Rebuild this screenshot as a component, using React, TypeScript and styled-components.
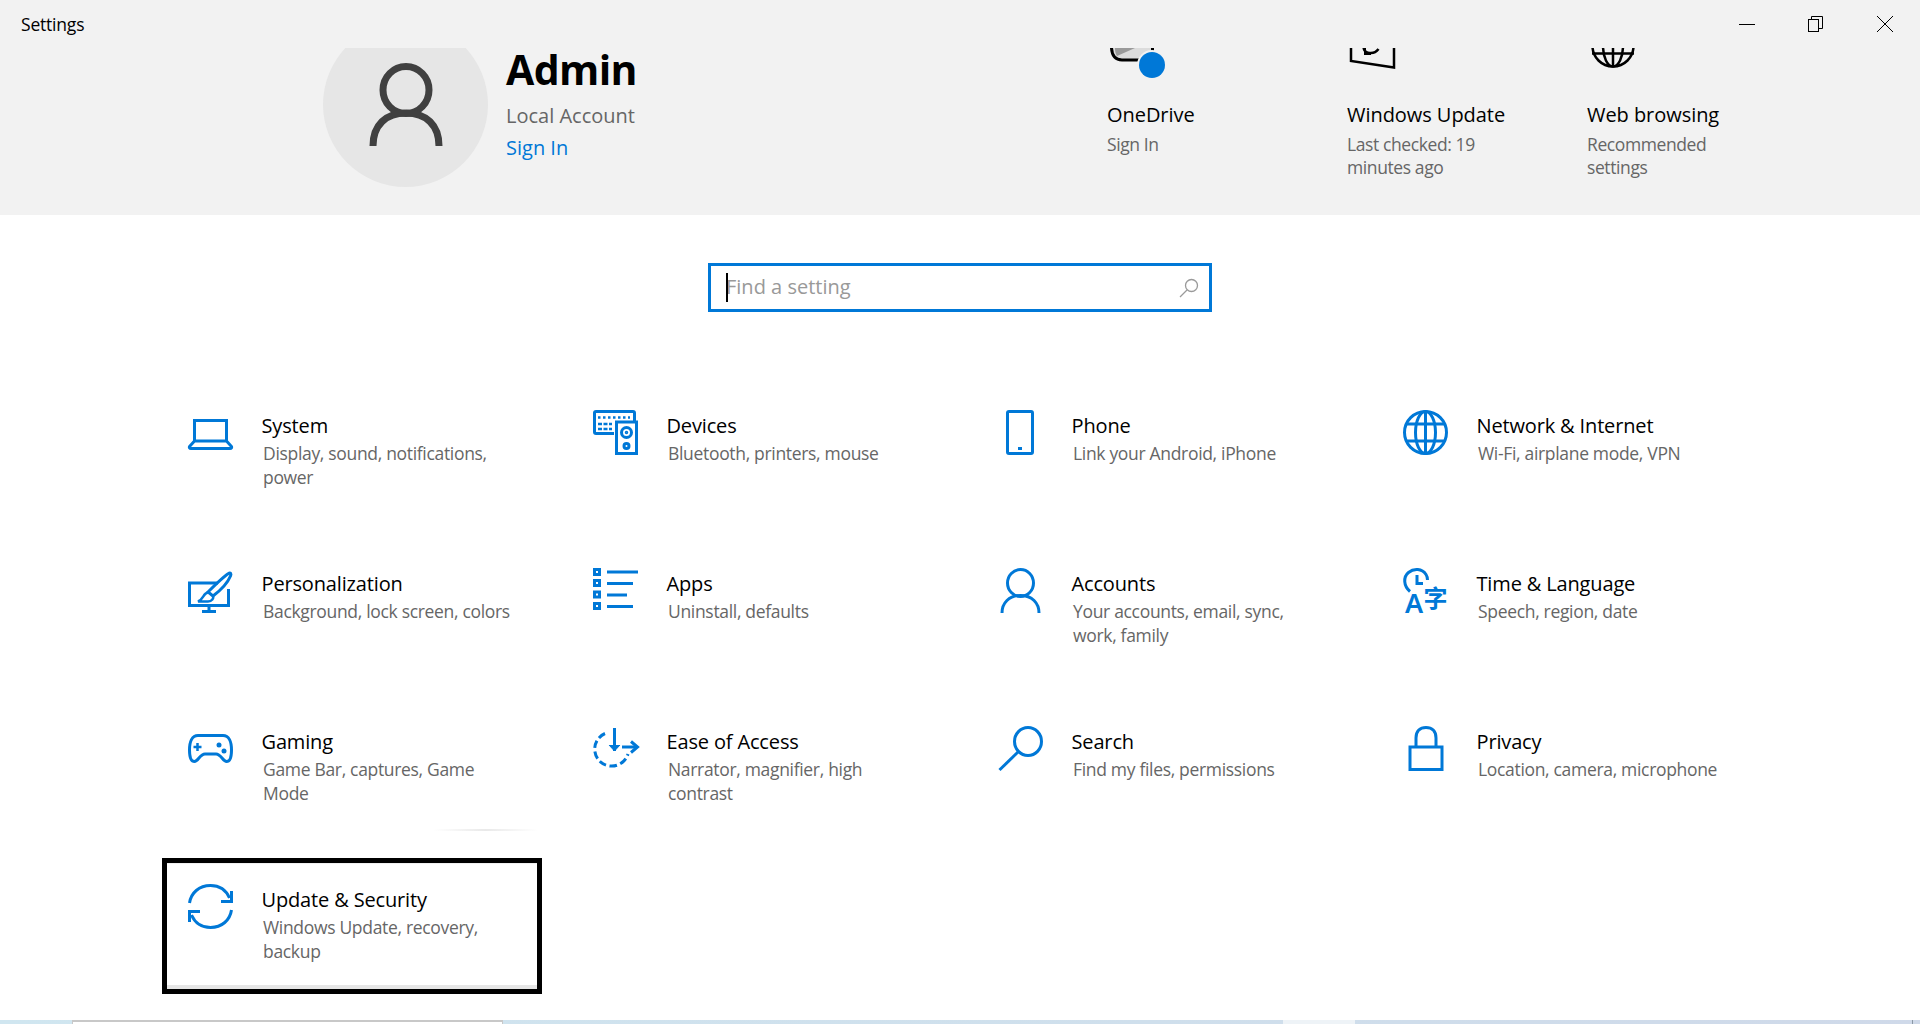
import { FC, ReactNode } from "react";
import styled, { createGlobalStyle } from "styled-components";

const BLUE = "#0078d7";

const GlobalStyle = createGlobalStyle`
  html, body {
    margin: 0;
    padding: 0;
    background: #ffffff;
    font-family: "Open Sans", "Noto Sans", "Liberation Sans", sans-serif;
  }
  * {
    box-sizing: border-box;
  }
`;

const Page = styled.div`
  width: 1920px;
  height: 1024px;
  display: flex;
  flex-direction: column;
  overflow: hidden;
`;

const Header = styled.header`
  height: 215px;
  flex: none;
  background: #f2f2f2;
  display: flex;
  flex-direction: column;
`;

const TitleBar = styled.div`
  height: 48px;
  flex: none;
  display: flex;
  align-items: center;
  justify-content: space-between;
  padding: 0 27px 0 21px;
`;

const AppTitle = styled.div`
  font-size: 17.5px;
  letter-spacing: -0.2px;
  color: #000;
`;

const WindowButtons = styled.div`
  display: flex;
  gap: 53px;
  svg {
    display: block;
  }
`;

const HeaderBody = styled.div`
  flex: 1;
  min-height: 0;
  display: flex;
  padding-left: 323px;
`;

const Profile = styled.div`
  width: 784px;
  flex: none;
  display: flex;
  gap: 18px;
`;

const AvatarClip = styled.div`
  width: 165px;
  height: 167px;
  flex: none;
  overflow: hidden;
`;

const Avatar = styled.div`
  width: 165px;
  height: 165px;
  margin-top: -26px;
  border-radius: 50%;
  background: #e6e6e6;
  display: flex;
  align-items: flex-start;
  justify-content: center;
  padding-top: 41px;
`;

const ProfileText = styled.div`
  display: flex;
  flex-direction: column;
`;

const UserName = styled.div`
  font-size: 41px;
  line-height: 42px;
  font-weight: 700;
  letter-spacing: -0.6px;
  color: #000;
`;

const AccountType = styled.div`
  font-size: 20px;
  line-height: 28px;
  margin-top: 12px;
  color: #666;
`;

const SignIn = styled.a`
  font-size: 20px;
  line-height: 28px;
  margin-top: 4px;
  color: ${BLUE};
`;

const Shortcut = styled.div`
  width: 240px;
  flex: none;
  display: flex;
  flex-direction: column;
`;

const ShortcutIcon = styled.svg`
  display: block;
  width: 60px;
  height: 54px;
  flex: none;
`;

const ShortcutTitle = styled.div`
  font-size: 20px;
  line-height: 26px;
  letter-spacing: -0.05px;
  color: #000;
`;

const ShortcutSub = styled.div`
  font-size: 17.5px;
  line-height: 23px;
  margin-top: 5px;
  max-width: 160px;
  letter-spacing: -0.4px;
  color: #666;
`;

const Main = styled.main`
  flex: 1;
  min-height: 0;
  display: flex;
  flex-direction: column;
  align-items: flex-start;
  padding: 48px 0 0 162px;
`;

const SearchBox = styled.div`
  width: 504px;
  height: 49px;
  margin-left: 546px;
  flex: none;
  border: 3px solid ${BLUE};
  display: flex;
  align-items: center;
  justify-content: space-between;
  padding: 0 10px 2px 15px;
`;

const Caret = styled.span`
  position: absolute;
  left: 0;
  top: 2px;
  width: 2px;
  height: 29px;
  background: #000;
`;

const Placeholder = styled.div`
  position: relative;
  font-size: 20px;
  line-height: 31px;
  color: #999;
`;

const SearchIcon = styled.svg`
  display: block;
  width: 20px;
  height: 20px;
  margin-top: 2px;
`;

const Grid = styled.div`
  display: grid;
  grid-template-columns: repeat(4, 380px);
  grid-auto-rows: 136px;
  column-gap: 25px;
  row-gap: 22px;
  margin-top: 72px;
`;

const Tile = styled.div<{ $focused?: boolean; $shadow?: boolean }>`
  position: relative;
  display: flex;
  align-items: flex-start;
  padding: 26px 0 0 26px;
  box-shadow: ${(p) =>
    p.$focused
      ? "inset 0 0 0 5px #000, inset 0 6px 0 0 #efefef, inset 0 -9px 0 0 #e6e6e6"
      : "none"};
  &::after {
    content: "";
    display: ${(p) => (p.$shadow ? "block" : "none")};
    position: absolute;
    left: 271px;
    bottom: 5px;
    width: 105px;
    height: 2px;
    background: linear-gradient(90deg, #ffffff, #e9e9e9 50%, #ffffff);
  }
`;

const TileIcon = styled.svg`
  display: block;
  width: 45px;
  height: 45px;
  flex: none;
  fill: none;
  stroke: ${BLUE};
  stroke-width: 3;
  overflow: visible;
`;

const TileText = styled.div`
  margin-left: 28.5px;
  margin-top: 3px;
  display: flex;
  flex-direction: column;
`;

const TileTitle = styled.div`
  font-size: 20px;
  line-height: 26px;
  letter-spacing: -0.15px;
  color: #000;
`;

const TileSub = styled.div`
  font-size: 17.5px;
  line-height: 24px;
  margin: 2px 0 0 1.5px;
  max-width: 250px;
  letter-spacing: -0.32px;
  color: #666;
`;

const BottomStrip = styled.div`
  height: 4px;
  flex: none;
  display: grid;
  grid-template-columns: 72px 431px 780px 72px 557px 1fr;
  background: linear-gradient(90deg, #d0e6f0, #cfdfec 60%, #cfd9e9);
`;

const StripWindow = styled.div`
  background: #ffffff;
  border-top: 2px solid #c8c8c8;
  border-left: 1px solid #c8c8c8;
  border-right: 1px solid #c8c8c8;
`;

const StripHighlight = styled.div`
  background: #eef3f7;
`;

const StripGap = styled.div``;

const StripEdge = styled.div`
  border-left: 1px solid #8b98a5;
`;

const SystemIcon = () => (
  <>
    <path d="M6.5 31V10.5H38.5V31" />
    <path d="M6.5 31H38.5L43.5 36.5C44 37.5 43.5 38.5 42 38.5H3C1.5 38.5 1 37.5 1.5 36.5Z" />
  </>
);

const DevicesIcon = () => (
  <>
    <path d="M21 23.5H3C2 23.5 1.5 23 1.5 22V3C1.5 2 2 1.5 3 1.5H40C41 1.5 41.5 2 41.5 3V11" />
    <path d="M5 7.5H37" strokeDasharray="2.5 2.5" strokeWidth="2.5" />
    <path d="M5 14H19M5 19H19" strokeDasharray="4 1.5" strokeWidth="2.5" />
    <rect x="23.5" y="12" width="20" height="31.5" />
    <circle cx="33.5" cy="22.5" r="5" />
    <circle cx="33.5" cy="22.5" r="1" strokeWidth="1.5" />
    <circle cx="33.5" cy="36" r="2.5" />
  </>
);

const PhoneIcon = () => (
  <>
    <rect x="9.5" y="1.5" width="25" height="42" rx="1.5" />
    <path d="M20 38.5H24" />
  </>
);

const NetworkIcon = () => (
  <>
    <circle cx="22.5" cy="22.5" r="21" />
    <ellipse cx="22.5" cy="22.5" rx="10" ry="21" />
    <path d="M22.5 1.5V43.5M3.5 14H41.5M3.5 31H41.5" />
  </>
);

const PersonalizationIcon = () => (
  <>
    <path d="M30 15H1.5V37.5H40.5V21" />
    <path d="M21 38V44M14 43.5H28" />
    <path d="M40.5 5.5C42.5 4 43.5 6 42.5 8C40 14 33 22 25 28L20 24C26 18 35 9 40.5 5.5Z" />
    <path d="M20 24.5C15 25 16 31 10 33.5H20C24 33.5 26 30 25 28" strokeWidth="2.5" />
  </>
);

const AppsIcon = () => (
  <>
    <rect x="1.5" y="1.5" width="5" height="5" />
    <rect x="1.5" y="12.5" width="5" height="5" />
    <rect x="1.5" y="24" width="5" height="5" />
    <rect x="1.5" y="35.5" width="5" height="5" />
    <path d="M14 4H45M14 15.5H40M14 27H34M14 38.5H40" />
  </>
);

const AccountsIcon = () => (
  <>
    <ellipse cx="22.5" cy="15" rx="13" ry="13.5" />
    <path d="M4 45C4 35 11 27.5 22.5 27.5C34 27.5 41 35 41 45" />
  </>
);

const TimeIcon = () => (
  <>
    <path d="M7 23.5C0.5 18 0 9 5.5 4.5C11 0 19 0.5 23 6.5C24 8 24.5 10 24.5 12" />
    <path d="M14 7V15.5H20" />
    <text
      x="2"
      y="45"
      fontFamily="Noto Sans, sans-serif"
      fontSize="27"
      fontWeight="600"
      fill={BLUE}
      stroke="none"
    >
      A
    </text>
    <text
      x="20.5"
      y="38.5"
      fontFamily="Noto Sans CJK SC, sans-serif"
      fontSize="24"
      fontWeight="700"
      fill={BLUE}
      stroke="none"
    >
      字
    </text>
  </>
);

const GamingIcon = () => (
  <>
    <path d="M10 9.5H35C41 9.5 43.5 16 43.5 24C43.5 31 42 35.5 38.5 35.5C35 35.5 33 28 28 28H17C12 28 10 35.5 6.5 35.5C3 35.5 1.5 31 1.5 24C1.5 16 4 9.5 10 9.5Z" />
    <path d="M5.5 21H13.5M9.5 17V25" strokeWidth="2.5" />
    <circle cx="31" cy="19" r="2.5" fill={BLUE} stroke="none" />
    <circle cx="36" cy="25" r="2.5" fill={BLUE} stroke="none" />
  </>
);

const EaseIcon = () => (
  <>
    <path
      d="M12 7.5A17 17 0 1 0 35 28"
      strokeDasharray="7.5 3.5"
    />
    <path d="M21.5 2V25" />
    <path d="M16 19L21.5 25L27 19" fill={BLUE} strokeWidth="1" />
    <path d="M29 21H43" />
    <path d="M38 15.5L44.5 21L38 26.5" strokeWidth="3" />
  </>
);

const SearchTileIcon = () => (
  <>
    <ellipse cx="30" cy="15.5" rx="13.5" ry="14" />
    <path d="M20 26L1.5 44" />
  </>
);

const PrivacyIcon = () => (
  <>
    <rect x="7" y="21" width="32" height="22.5" />
    <path d="M13 21V12C13 5 17 1.5 23 1.5C29 1.5 33 5 33 12V21" />
  </>
);

const UpdateIcon = () => (
  <>
    <path d="M1.5 19C3 9 11 1.5 22.5 1.5C31 1.5 38 6 41.5 14" />
    <path d="M43.5 7V17.5H33" />
    <path d="M43.5 26C42 36 34 43.5 22.5 43.5C14 43.5 7 39 3.5 31" />
    <path d="M1.5 38V27.5H12" />
  </>
);

interface ITile {
  name: string;
  desc: string;
  icon: ReactNode;
}

const tiles: ITile[] = [
  { name: "System", desc: "Display, sound, notifications, power", icon: <SystemIcon /> },
  { name: "Devices", desc: "Bluetooth, printers, mouse", icon: <DevicesIcon /> },
  { name: "Phone", desc: "Link your Android, iPhone", icon: <PhoneIcon /> },
  { name: "Network & Internet", desc: "Wi-Fi, airplane mode, VPN", icon: <NetworkIcon /> },
  { name: "Personalization", desc: "Background, lock screen, colors", icon: <PersonalizationIcon /> },
  { name: "Apps", desc: "Uninstall, defaults", icon: <AppsIcon /> },
  { name: "Accounts", desc: "Your accounts, email, sync, work, family", icon: <AccountsIcon /> },
  { name: "Time & Language", desc: "Speech, region, date", icon: <TimeIcon /> },
  { name: "Gaming", desc: "Game Bar, captures, Game Mode", icon: <GamingIcon /> },
  { name: "Ease of Access", desc: "Narrator, magnifier, high contrast", icon: <EaseIcon /> },
  { name: "Search", desc: "Find my files, permissions", icon: <SearchTileIcon /> },
  { name: "Privacy", desc: "Location, camera, microphone", icon: <PrivacyIcon /> },
  { name: "Update & Security", desc: "Windows Update, recovery, backup", icon: <UpdateIcon /> }
];

const App: FC = () => {
  return (
    <Page>
      <GlobalStyle />
      <Header>
        <TitleBar>
          <AppTitle>Settings</AppTitle>
          <WindowButtons>
            <svg width="16" height="16" viewBox="0 0 16 16" fill="none" stroke="#000" strokeWidth="1">
              <path d="M0 8.5H16" />
            </svg>
            <svg width="16" height="16" viewBox="0 0 16 16" fill="none" stroke="#000" strokeWidth="1">
              <rect x="0.5" y="3.5" width="10" height="12" />
              <path d="M3.5 3.5V0.5H14.5V12.5H10.5" />
            </svg>
            <svg width="16" height="16" viewBox="0 0 16 16" fill="none" stroke="#000" strokeWidth="1">
              <path d="M0 0L16 16M16 0L0 16" />
            </svg>
          </WindowButtons>
        </TitleBar>
        <HeaderBody>
          <Profile>
            <AvatarClip>
              <Avatar>
                <svg width="76" height="86" viewBox="0 0 76 86" fill="none" stroke="#404040" strokeWidth="7">
                  <ellipse cx="38" cy="27" rx="23" ry="23.5" />
                  <path d="M5 83C5 62 18 50 38 50C58 50 71 62 71 83" />
                </svg>
              </Avatar>
            </AvatarClip>
            <ProfileText>
              <UserName>Admin</UserName>
              <AccountType>Local Account</AccountType>
              <SignIn>Sign In</SignIn>
            </ProfileText>
          </Profile>
          <Shortcut>
            <ShortcutIcon viewBox="0 0 60 54">
              <path d="M4.5 0C5 8 9 12 15 12H44V0Z" fill="#dcdcdc" />
              <path d="M8 0H28L10 8C8.5 6 8 3 8 0Z" fill="#9a9a9a" />
              <path d="M4.5 0C5 8 9 12 15 12H44" fill="none" stroke="#000" strokeWidth="3" />
              <path d="M44 1.5H47" stroke="#000" strokeWidth="3" />
              <circle cx="45" cy="17" r="15" fill="#f2f2f2" />
              <circle cx="45" cy="17" r="13" fill={BLUE} />
            </ShortcutIcon>
            <ShortcutTitle>OneDrive</ShortcutTitle>
            <ShortcutSub>Sign In</ShortcutSub>
          </Shortcut>
          <Shortcut>
            <ShortcutIcon viewBox="0 0 60 54" fill="none" stroke="#000" strokeWidth="2.5">
              <path d="M4 0V13L47 19.5V0" />
              <path d="M16.5 0C18 6 27 7 31.5 1" />
              <path d="M18 0V6L24 6" strokeWidth="2" />
            </ShortcutIcon>
            <ShortcutTitle>Windows Update</ShortcutTitle>
            <ShortcutSub>Last checked: 19 minutes ago</ShortcutSub>
          </Shortcut>
          <Shortcut>
            <ShortcutIcon viewBox="0 0 60 54" fill="none" stroke="#000" strokeWidth="2.5">
              <circle cx="26" cy="-2" r="20.5" />
              <ellipse cx="26" cy="-2" rx="10" ry="20.5" />
              <path d="M26 0V18M5 5.5H47" />
            </ShortcutIcon>
            <ShortcutTitle>Web browsing</ShortcutTitle>
            <ShortcutSub>Recommended settings</ShortcutSub>
          </Shortcut>
        </HeaderBody>
      </Header>
      <Main>
        <SearchBox>
          <Placeholder>
            <Caret />
            Find a setting
          </Placeholder>
          <SearchIcon viewBox="0 0 20 20" fill="none" stroke="#9a9a9a" strokeWidth="1.3">
            <circle cx="12.5" cy="7.5" r="6" />
            <path d="M8 12L1 19" />
          </SearchIcon>
        </SearchBox>
        <Grid>
          {tiles.map((tile) => (
            <Tile
              key={tile.name}
              $focused={tile.name === "Update & Security"}
              $shadow={tile.name === "Gaming"}
            >
              <TileIcon viewBox="0 0 45 45">{tile.icon}</TileIcon>
              <TileText>
                <TileTitle>{tile.name}</TileTitle>
                <TileSub>{tile.desc}</TileSub>
              </TileText>
            </Tile>
          ))}
        </Grid>
      </Main>
      <BottomStrip>
        <StripGap />
        <StripWindow />
        <StripGap />
        <StripHighlight />
        <StripGap />
        <StripEdge />
      </BottomStrip>
    </Page>
  );
};

export default App;
